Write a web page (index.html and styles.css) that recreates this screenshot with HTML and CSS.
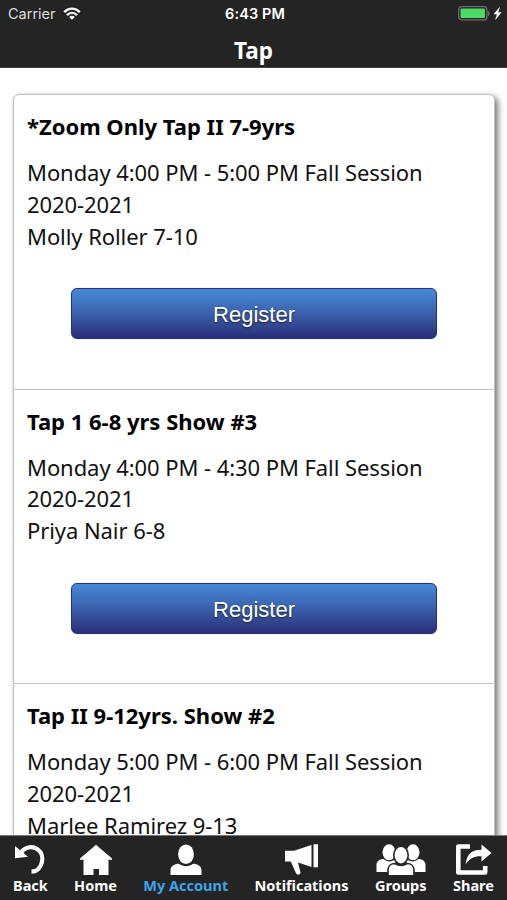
FILE: index.html
```html
<!DOCTYPE html>
<html lang="en">
<head>
<meta charset="utf-8">
<title>Tap</title>
<link rel="stylesheet" href="styles.css">
</head>
<body>
<div class="app">
  <header class="header">
    <div class="status">
      <div class="carrier"><span>Carrier</span>
        <svg class="wifi" viewBox="0 0 18 13" width="18" height="13"><g fill="none" stroke="#fff" stroke-width="2.4"><path d="M1.200 5.100C5.700.5 12.300.5 16.800 5.100"/><path d="M4 8.100c3-3 7-3 10 0"/></g><path fill="#fff" d="M6.200 9.900c1.600-1.500 4-1.500 5.600 0L9 12.700z"/></svg>
      </div>
      <span class="time">6:43 PM</span>
      <div class="power">
        <svg viewBox="0 0 44 15" width="44" height="15"><rect x=".7" y=".7" width="28.2" height="13.2" rx="3" fill="#202020" stroke="#6d6d6d" stroke-width="1.3"/><rect x="2.5" y="2.5" width="24.5" height="9.6" rx="1" fill="#4cd964"/><path fill="#6d6d6d" d="M30 5c2.200.5 2.200 4.500 0 5z"/><path fill="#fff" stroke="#fff" stroke-width=".5" d="M41.500 1.500 36 8.100h3.200l-1.600 5.300 5.500-7h-3.200z"/></svg>
      </div>
    </div>
    <h1 class="title">Tap</h1>
  </header>
  <main class="content">
    <div class="card">
      <section class="class-item">
        <h2>*Zoom Only Tap II 7-9yrs</h2>
        <p>Monday 4:00 PM - 5:00 PM Fall Session 2020-2021<br>Molly Roller 7-10</p>
        <button class="register">Register</button>
      </section>
      <section class="class-item">
        <h2>Tap 1 6-8 yrs Show #3</h2>
        <p>Monday 4:00 PM - 4:30 PM Fall Session 2020-2021<br>Priya Nair 6-8</p>
        <button class="register">Register</button>
      </section>
      <section class="class-item">
        <h2>Tap II 9-12yrs. Show #2</h2>
        <p>Monday 5:00 PM - 6:00 PM Fall Session 2020-2021<br>Marlee Ramirez 9-13</p>
      </section>
    </div>
  </main>
  <nav class="tabs">
    <a class="tab"><svg viewBox="0 0 34 34" width="34" height="34"><path d="M7.500 10.500C11 3.800 19 2.500 24.500 6.200C33 12 29.500 28.500 18.500 28.700" fill="none" stroke="#fff" stroke-width="4.200"/><path d="M2 3v12.200l13-1.500z" fill="#fff"/></svg><span>Back</span></a>
    <a class="tab"><svg viewBox="0 0 34 34" width="34" height="34"><path fill="#fff" d="M17 1.700 33 15.500v1.300h-3.500V32H20v-6h-5.500v6H4.500V16.800H1v-1.300z"/></svg><span>Home</span></a>
    <a class="tab active"><svg viewBox="0 0 34 34" width="34" height="34"><g fill="#fff"><ellipse cx="17" cy="11.300" rx="7.900" ry="9.800"/><path d="M1.500 32v-4.500c0-4.500 4-6.700 8.300-6.700 4 3.200 10.400 3.200 14.400 0 4.300 0 8.300 2.200 8.300 6.700V32z"/></g></svg><span>My Account</span></a>
    <a class="tab"><svg viewBox="0 0 36 34" width="36" height="34"><g fill="#fff"><path d="M2 7.700h9L28.500 2v22l-13.500-4.500 2.500 10c.3 2.200-3.700 2.800-4.500.8L7.800 18.500H2z"/><path d="M30.500 1.300H35v23h-4.500z"/></g></svg><span>Notifications</span></a>
    <a class="tab"><svg viewBox="0 0 52 34" width="52" height="34"><g fill="#fff"><ellipse cx="14" cy="9.300" rx="6.500" ry="8"/><path d="M1.500 29v-7c0-4 3.500-6 7-6 4 3.200 8 3.200 12 0v13z"/><ellipse cx="38" cy="9.300" rx="6.500" ry="8"/><path d="M50.500 29v-7c0-4-3.500-6-7-6-4 3.200-8 3.200-12 0v13z"/></g><g fill="#fff" stroke="#242424" stroke-width="1.600"><path d="M13 32.700V27c0-4 3-6.500 7-6.500 4 2.500 8 2.500 12 0 4 0 7 2.500 7 6.500v5.700z"/><ellipse cx="26" cy="12.200" rx="7.200" ry="9"/></g></svg><span>Groups</span></a>
    <a class="tab"><svg viewBox="0 0 38 34" width="38" height="34"><path d="M16 3.500H4.300V29.500H31.200V23" fill="none" stroke="#fff" stroke-width="4.600" stroke-linejoin="round"/><path d="M11.500 21.500C13 10.500 18 7 27.500 6.800V1.500L37.500 10l-10 8.500v-5.300C21 12.800 15.500 15 11.500 21.500z" fill="#fff"/></svg><span>Share</span></a>
  </nav>
</div>
</body>
</html>
```
FILE: styles.css
```css
* { box-sizing: border-box; }
body { margin: 0; background: #fff; font-family: "Noto Sans", sans-serif; color: #111; }
.app { height: 900px; width: 507px; display: flex; flex-direction: column; overflow: hidden; }
.header { height: 68px; flex: none; background: #242424; color: #fff; border-bottom: 1px solid #444; }
.status { height: 27px; display: grid; grid-template-columns: 1fr auto 1fr; align-items: center; padding: 0 5px 0 8px; font: 14.500px Inter, sans-serif; }
.carrier { display: flex; align-items: center; gap: 7px; color: #ddd; }
.time { font-weight: 600; letter-spacing: .1px; }
.power { display: flex; justify-content: flex-end; }
.power svg, .wifi { display: block; }
.title { margin: 8px 0 0; text-align: center; font-size: 22.500px; line-height: 32px; font-weight: 700; }
.content { flex: 1; min-height: 0; overflow: hidden; padding: 26px 12px 0 13px; }
.card { height: 900px; border: 1px solid #c0c0c0; border-radius: 6px; box-shadow: 3px 3px 6px rgba(0,0,0,.55); background: #fff; }
.class-item { height: 294.500px; padding: 14px 13px 0; border-bottom: 1px solid #c4c4c4; }
.class-item h2 { margin: 0; font-size: 22px; line-height: 34px; color: #000; }
.class-item p { margin: 14px 0 0; font-size: 22px; line-height: 31.800px; letter-spacing: -.07px; }
.register { display: block; width: 366px; height: 51px; margin: 36px auto 0; padding: 3px 0 0; border: 1px solid #29317d; border-radius: 6px; background: linear-gradient(#468ad6, #3b62ae 48%, #2a2e78); color: #fff; font: 22px "Liberation Sans", sans-serif; text-shadow: 0 1px 2px #222; box-shadow: 0 0 1px #8ea0e8; }
.tabs { height: 65px; flex: none; background: #242424; border-top: 1px solid #777; display: flex; justify-content: space-between; padding: 7px 13px 0; }
.tab { display: flex; flex-direction: column; align-items: center; color: #fff; font-size: 14.500px; font-weight: 700; line-height: 16px; white-space: nowrap; }
.tab svg { display: block; flex: none; }
.active { color: #3ca5e8; }
```
